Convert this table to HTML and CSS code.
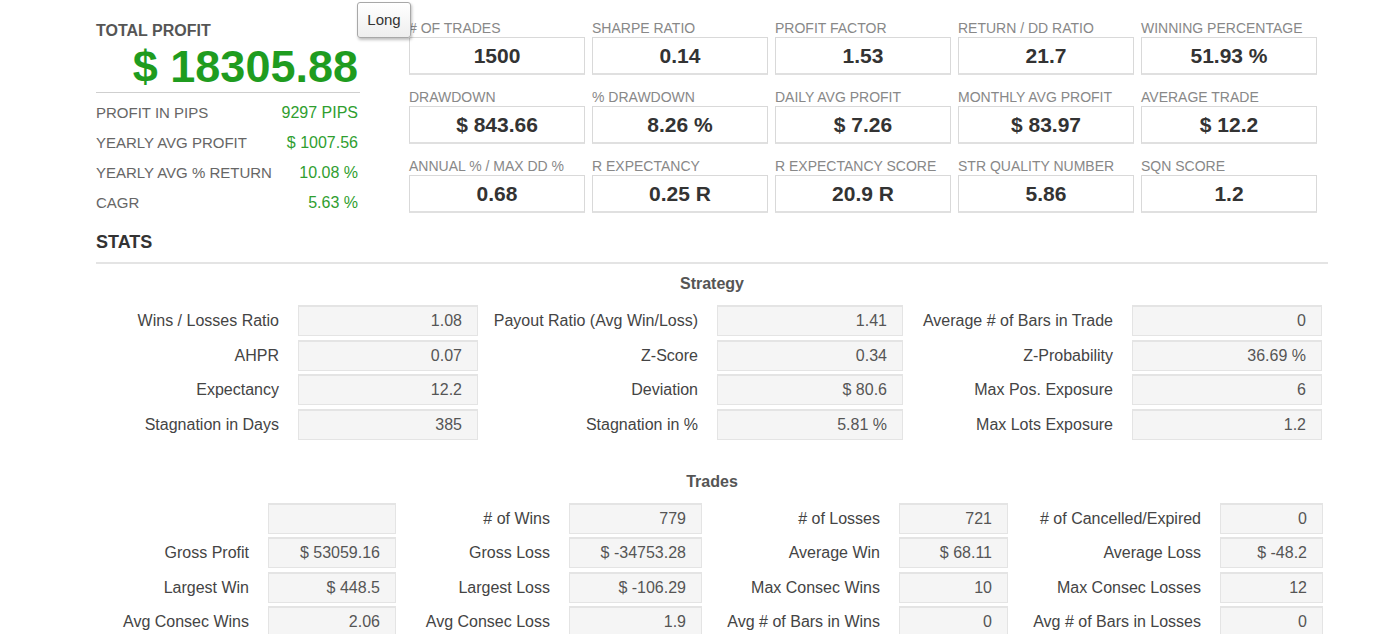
FILE: index.html
```html
<!DOCTYPE html>
<html>
<head>
<meta charset="utf-8">
<title>Stats</title>
<link rel="stylesheet" href="styles.css">
</head>
<body>
<div class="page">
  <div class="top">
    <div class="summary">
      <div class="summary-title">TOTAL PROFIT</div>
      <div class="summary-big">$ 18305.88</div>
      <div class="summary-list">
        <div class="summary-row"><span>PROFIT IN PIPS</span><span class="green">9297 PIPS</span></div>
        <div class="summary-row"><span>YEARLY AVG PROFIT</span><span class="green">$ 1007.56</span></div>
        <div class="summary-row"><span>YEARLY AVG % RETURN</span><span class="green">10.08 %</span></div>
        <div class="summary-row"><span>CAGR</span><span class="green">5.63 %</span></div>
      </div>
    </div>
    <div class="metrics">
      <div class="metric"><div class="metric-label"># OF TRADES</div><div class="metric-box">1500</div></div>
      <div class="metric"><div class="metric-label">SHARPE RATIO</div><div class="metric-box">0.14</div></div>
      <div class="metric"><div class="metric-label">PROFIT FACTOR</div><div class="metric-box">1.53</div></div>
      <div class="metric"><div class="metric-label">RETURN / DD RATIO</div><div class="metric-box">21.7</div></div>
      <div class="metric"><div class="metric-label">WINNING PERCENTAGE</div><div class="metric-box">51.93 %</div></div>
      <div class="metric"><div class="metric-label">DRAWDOWN</div><div class="metric-box">$ 843.66</div></div>
      <div class="metric"><div class="metric-label">% DRAWDOWN</div><div class="metric-box">8.26 %</div></div>
      <div class="metric"><div class="metric-label">DAILY AVG PROFIT</div><div class="metric-box">$ 7.26</div></div>
      <div class="metric"><div class="metric-label">MONTHLY AVG PROFIT</div><div class="metric-box">$ 83.97</div></div>
      <div class="metric"><div class="metric-label">AVERAGE TRADE</div><div class="metric-box">$ 12.2</div></div>
      <div class="metric"><div class="metric-label">ANNUAL % / MAX DD %</div><div class="metric-box">0.68</div></div>
      <div class="metric"><div class="metric-label">R EXPECTANCY</div><div class="metric-box">0.25 R</div></div>
      <div class="metric"><div class="metric-label">R EXPECTANCY SCORE</div><div class="metric-box">20.9 R</div></div>
      <div class="metric"><div class="metric-label">STR QUALITY NUMBER</div><div class="metric-box">5.86</div></div>
      <div class="metric"><div class="metric-label">SQN SCORE</div><div class="metric-box">1.2</div></div>
    </div>
  </div>

  <div class="stats">
    <h2 class="stats-title">STATS</h2>

    <h3 class="group-title">Strategy</h3>
    <div class="table strategy">
      <div class="lbl">Wins / Losses Ratio</div><div class="val">1.08</div>
      <div class="lbl">Payout Ratio (Avg Win/Loss)</div><div class="val">1.41</div>
      <div class="lbl">Average # of Bars in Trade</div><div class="val">0</div>

      <div class="lbl">AHPR</div><div class="val">0.07</div>
      <div class="lbl">Z-Score</div><div class="val">0.34</div>
      <div class="lbl">Z-Probability</div><div class="val">36.69 %</div>

      <div class="lbl">Expectancy</div><div class="val">12.2</div>
      <div class="lbl">Deviation</div><div class="val">$ 80.6</div>
      <div class="lbl">Max Pos. Exposure</div><div class="val">6</div>

      <div class="lbl">Stagnation in Days</div><div class="val">385</div>
      <div class="lbl">Stagnation in %</div><div class="val">5.81 %</div>
      <div class="lbl">Max Lots Exposure</div><div class="val">1.2</div>
    </div>

    <h3 class="group-title trades-title">Trades</h3>
    <div class="table trades">
      <div class="lbl"></div><div class="val"></div>
      <div class="lbl"># of Wins</div><div class="val">779</div>
      <div class="lbl"># of Losses</div><div class="val">721</div>
      <div class="lbl"># of Cancelled/Expired</div><div class="val">0</div>

      <div class="lbl">Gross Profit</div><div class="val">$ 53059.16</div>
      <div class="lbl">Gross Loss</div><div class="val">$ -34753.28</div>
      <div class="lbl">Average Win</div><div class="val">$ 68.11</div>
      <div class="lbl">Average Loss</div><div class="val">$ -48.2</div>

      <div class="lbl">Largest Win</div><div class="val">$ 448.5</div>
      <div class="lbl">Largest Loss</div><div class="val">$ -106.29</div>
      <div class="lbl">Max Consec Wins</div><div class="val">10</div>
      <div class="lbl">Max Consec Losses</div><div class="val">12</div>

      <div class="lbl">Avg Consec Wins</div><div class="val">2.06</div>
      <div class="lbl">Avg Consec Loss</div><div class="val">1.9</div>
      <div class="lbl">Avg # of Bars in Wins</div><div class="val">0</div>
      <div class="lbl">Avg # of Bars in Losses</div><div class="val">0</div>
    </div>
  </div>
</div>
<div class="tooltip">Long</div>
</body>
</html>
```

FILE: styles.css
```css
html, body {
  margin: 0;
  padding: 0;
  background: #ffffff;
  font-family: "Liberation Sans", Arial, sans-serif;
  color: #444;
  overflow: hidden;
}

.page {
  padding-left: 96px;
  width: 1232px;
}

.top {
  display: flex;
  align-items: flex-start;
}

.summary {
  width: 264px;
  margin-top: 22px;
}

.summary-title {
  font-size: 16px;
  line-height: 18px;
  font-weight: bold;
  color: #555;
}

.summary-big {
  margin-top: 4px;
  font-size: 45px;
  line-height: 46px;
  font-weight: bold;
  color: #1f9c1f;
  text-align: right;
  padding-right: 2px;
  padding-bottom: 2px;
  border-bottom: 1px solid #cfcfcf;
}

.summary-list {
  padding-top: 5px;
}

.summary-row {
  display: flex;
  justify-content: space-between;
  align-items: baseline;
  font-size: 15px;
  line-height: 30px;
  color: #666;
  padding-right: 2px;
}

.green {
  color: #2f9e2f;
  font-size: 16px;
}

.metrics {
  margin-left: 49px;
  margin-top: 19px;
  display: grid;
  grid-template-columns: repeat(5, 176px);
  column-gap: 7px;
  row-gap: 13px;
}

.metric-label {
  font-size: 14px;
  line-height: 18px;
  color: #888;
  white-space: nowrap;
}

.metric-box {
  box-sizing: border-box;
  height: 38px;
  border: 1px solid #d9d9d9;
  border-bottom: 2px solid #e0e0e0;
  text-align: center;
  font-size: 21px;
  line-height: 35px;
  font-weight: bold;
  color: #333;
}

.stats-title {
  margin: 13px 0 0 0;
  font-size: 18px;
  line-height: 22px;
  font-weight: bold;
  color: #333;
  padding-bottom: 9px;
  border-bottom: 2px solid #e4e4e4;
}

.group-title {
  margin: 10px 0 11px 0;
  text-align: center;
  font-size: 16px;
  line-height: 20px;
  font-weight: bold;
  color: #555;
}

.trades-title {
  margin-top: 32px;
}

.table {
  display: grid;
  row-gap: 3.5px;
  grid-auto-rows: 31px;
}

.strategy {
  grid-template-columns: 202px 180px 239px 186px 229px 190px;
}

.trades {
  grid-template-columns: 172px 128px 173px 133px 197px 109px 212px 103px;
}

.lbl {
  text-align: right;
  padding-right: 19px;
  font-size: 16px;
  line-height: 31px;
  color: #444;
  white-space: nowrap;
}

.val {
  box-sizing: border-box;
  background: #f5f5f5;
  border: 1px solid #e4e4e4;
  border-top-width: 2px;
  text-align: right;
  padding-right: 15px;
  font-size: 16px;
  line-height: 27px;
  color: #555;
  white-space: nowrap;
}

.tooltip {
  position: absolute;
  left: 357px;
  top: 2px;
  width: 54px;
  height: 36px;
  box-sizing: border-box;
  border: 1px solid #a8a8a8;
  border-radius: 3px;
  background: linear-gradient(#ffffff, #eeeeee);
  box-shadow: 1px 2px 3px rgba(0, 0, 0, 0.25);
  font-size: 15px;
  line-height: 34px;
  text-align: center;
  color: #333;
}
```
